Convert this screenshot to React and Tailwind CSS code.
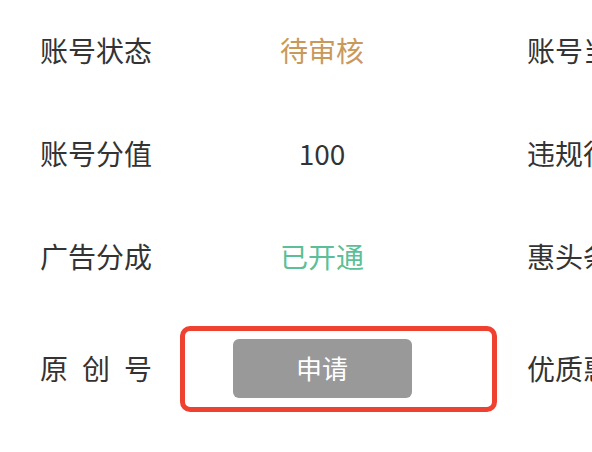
import React from 'react';

const FONT = { fontFamily: '"PingFang SC", "Noto Sans CJK SC", "Noto Sans", sans-serif' };

const rows = [
  { label: '账号状态', value: '待审核', tone: 'text-[#c9995c]', right: '账号当前类型' },
  { label: '账号分值', value: '100', tone: 'text-[#333333]', right: '违规行为记录' },
  { label: '广告分成', value: '已开通', tone: 'text-[#5cbf98]', right: '惠头条收益' },
];

export default function App() {
  return (
    <div className="w-[592px] h-[452px] overflow-hidden bg-white text-[#333333]" style={FONT}>
      {rows.map((row) => (
        <div key={row.label} className="flex items-center h-[103px] pb-[4px] pl-[40px] text-[28px] leading-none whitespace-nowrap">
          <div className="w-[112px] shrink-0">{row.label}</div>
          <div className={`w-[340px] shrink-0 text-center ${row.tone}`}>{row.value}</div>
          <div className="ml-[35px] shrink-0">{row.right}</div>
        </div>
      ))}

      {/* last row: apply button with red highlight */}
      <div className="relative flex items-center h-[118px] pl-[40px] text-[28px] leading-none whitespace-nowrap">
        <div className="w-[112px] shrink-0 flex justify-between">
          <span>原</span>
          <span>创</span>
          <span>号</span>
        </div>
        <div className="w-[340px] shrink-0 flex justify-center">
          <button
            type="button"
            className="w-[179px] h-[59px] rounded-[6px] bg-[#999999] text-white text-[26px] leading-none"
          >
            申请
          </button>
        </div>
        <div className="ml-[35px] shrink-0">优质惠头条号</div>
        <div className="absolute left-[180px] top-[17px] w-[317px] h-[86px] rounded-[10px] border-[5px] border-[#ee4130] pointer-events-none" />
      </div>
    </div>
  );
}
